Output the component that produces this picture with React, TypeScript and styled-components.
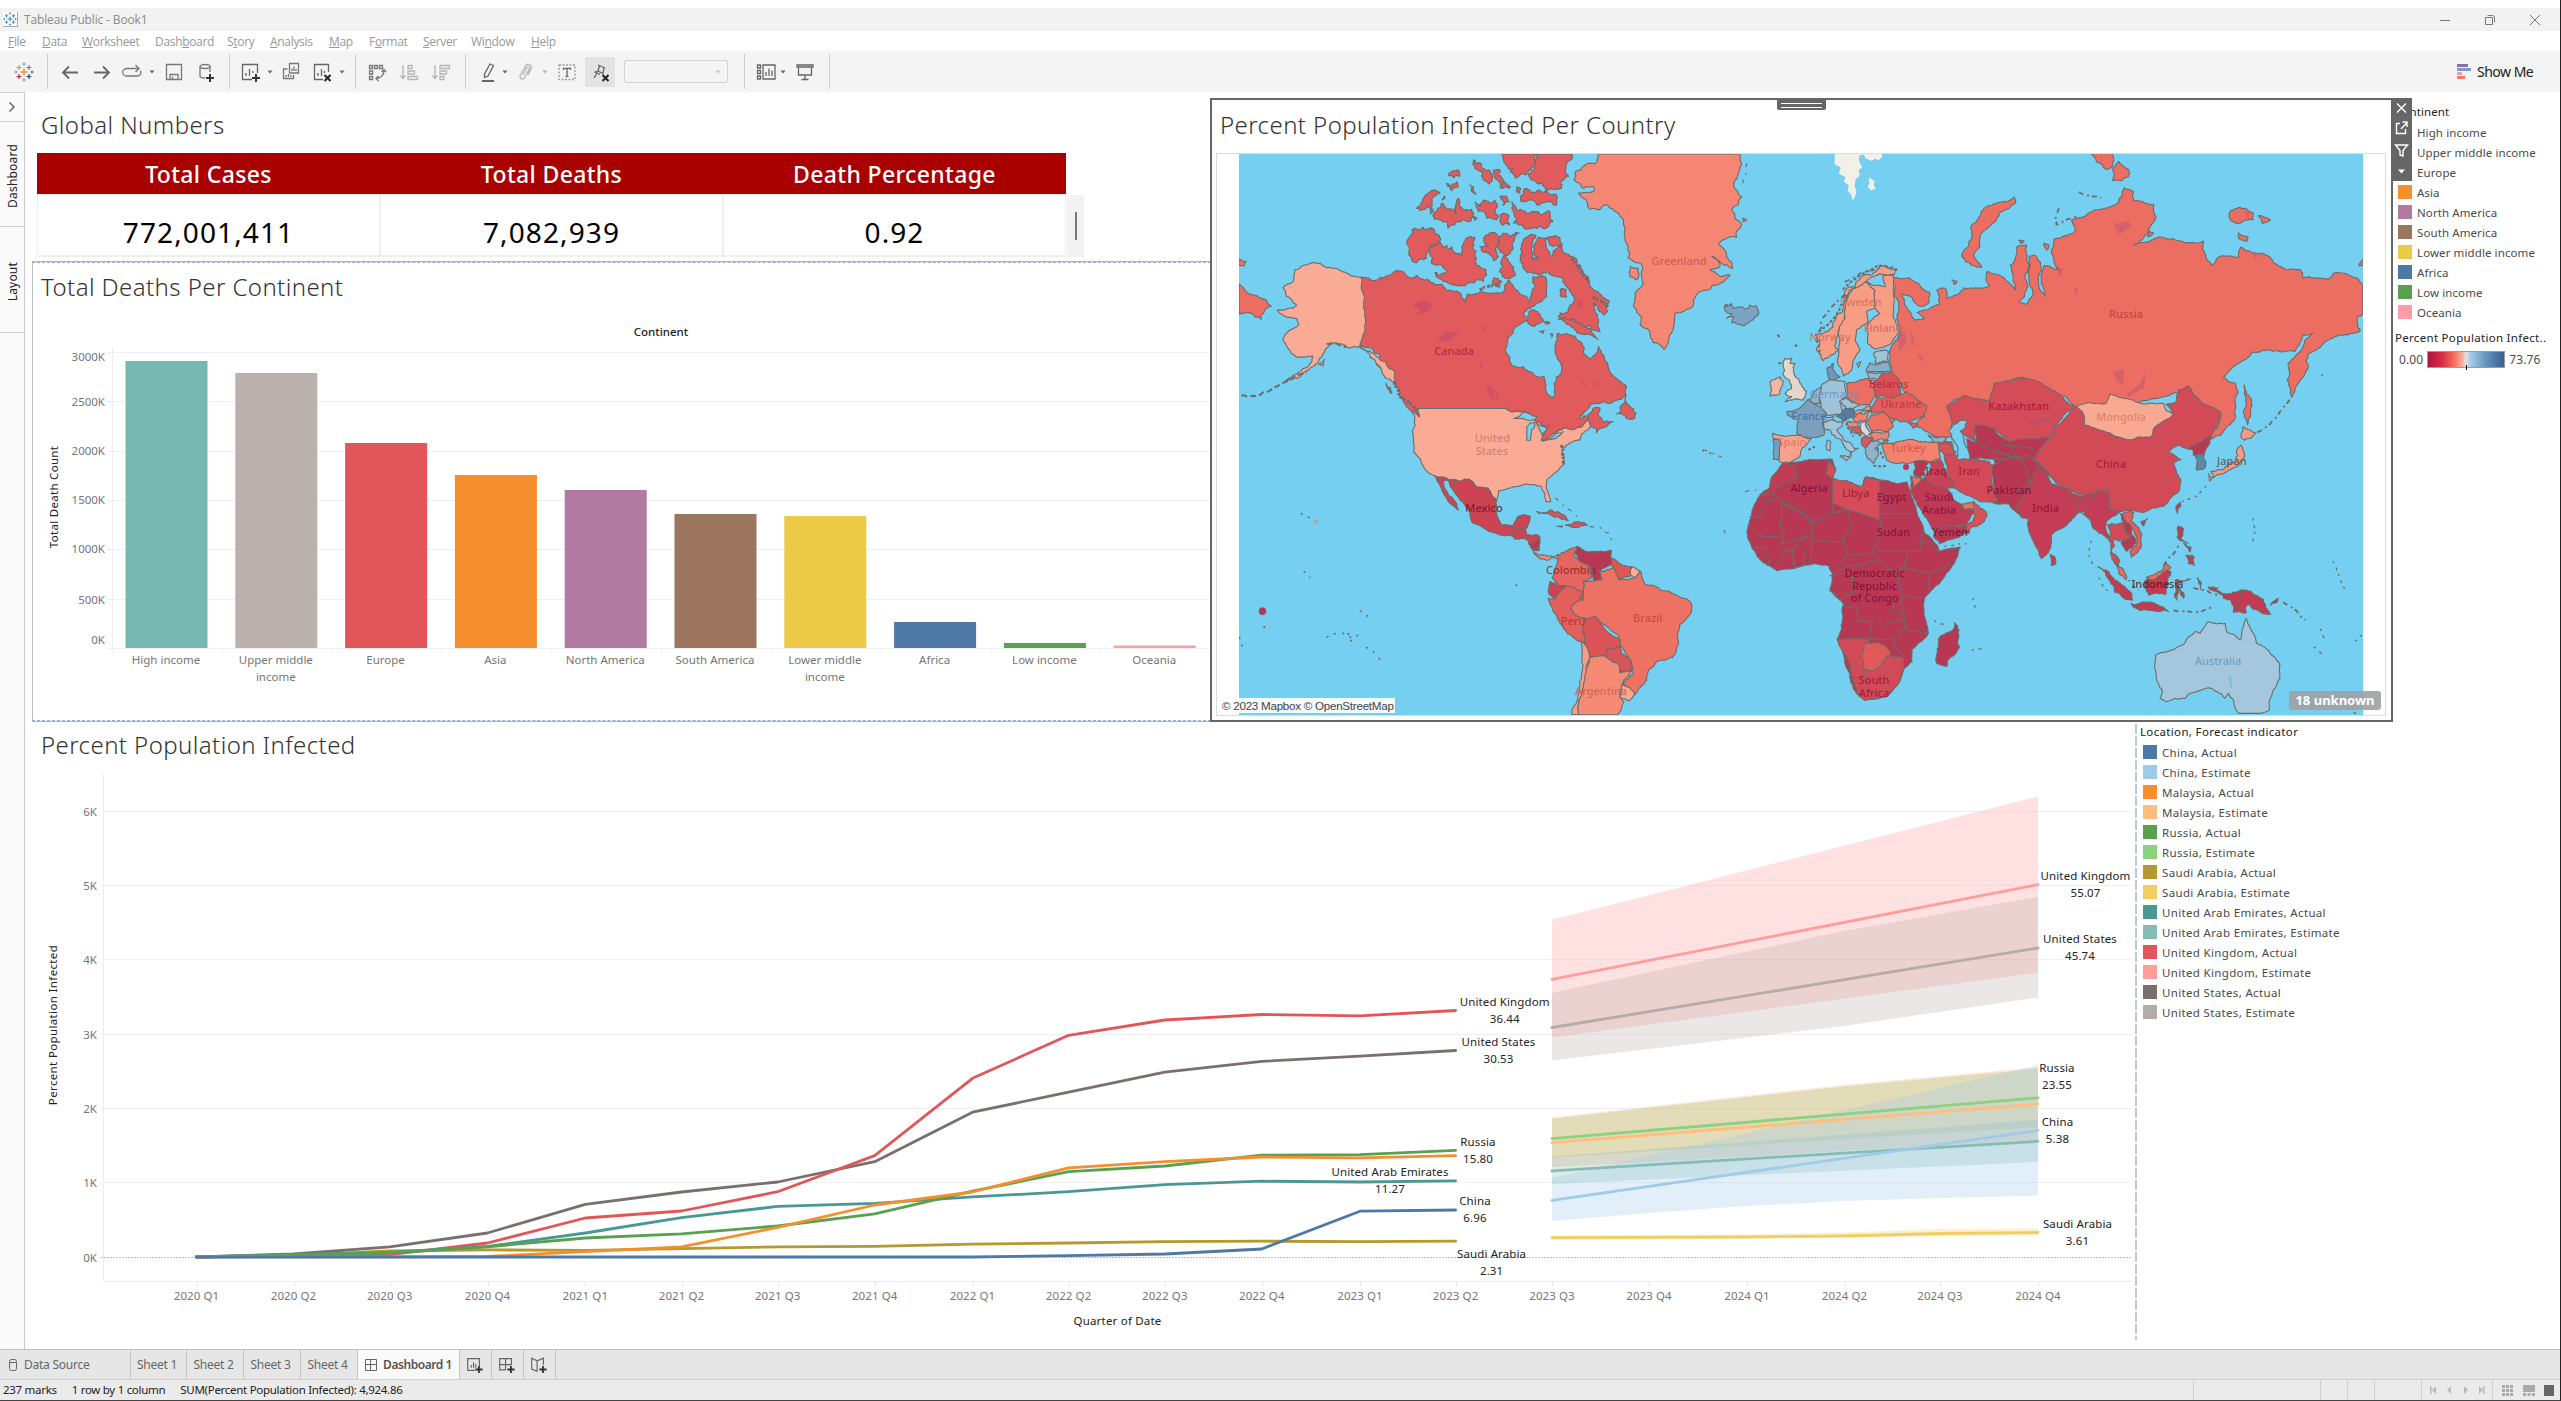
import React from "react";
import styled, { createGlobalStyle, css } from "styled-components";

const UI = `"Noto Sans", "Open Sans", sans-serif`;

const GlobalStyle = createGlobalStyle`
  * { box-sizing: border-box; }
  body { margin: 0; background: #fff; font-family: ${UI}; color: #333; }
`;

/* ---------- window chrome ---------- */

const Window = styled.div`
  width: 2561px;
  height: 1401px;
  display: flex;
  flex-direction: column;
  overflow: hidden;
  background: #fff;
  border-right: 1px solid #222;
  border-bottom: 1px solid #444;
  padding-top: 8px;
`;

const TitleBar = styled.header`
  height: 23px;
  flex: none;
  background: #f2f2f2;
  display: flex;
  align-items: center;
  padding-left: 3px;
  font: 12px/23px "Open Sans", sans-serif;
  letter-spacing: -0.15px;
  color: #8a8a8a;
`;

const AppBadge = styled.span`
  width: 15px;
  height: 15px;
  background: #fff;
  border-right: 1px solid #aaa;
  border-bottom: 1px solid #aaa;
  display: flex;
  margin-right: 6px;
`;

const WindowButtons = styled.div`
  margin-left: auto;
  display: flex;
  gap: 33px;
  margin-right: 19px;
`;

const MenuBar = styled.nav`
  height: 20px;
  flex: none;
  display: flex;
  padding-left: 8px;
  font: 12px/21px "Open Sans", sans-serif;
  letter-spacing: -0.32px;
  color: #989898;
`;

const MenuItem = styled.span<{ $w: number }>`
  width: ${(p) => p.$w}px;
  white-space: nowrap;
`;

const ToolBar = styled.div`
  height: 41px;
  flex: none;
  background: #f4f4f4;
  display: flex;
  align-items: center;
  padding-left: 14px;
`;

const ToolItem = styled.span<{ $gap: number; $w: number }>`
  margin-left: ${(p) => p.$gap}px;
  width: ${(p) => p.$w}px;
  display: flex;
  justify-content: center;
  flex: none;
`;

const Separator = styled.span<{ $gap: number }>`
  margin-left: ${(p) => p.$gap}px;
  width: 1px;
  height: 35px;
  background: #cfcfcf;
`;

const PinButton = styled.span`
  margin-left: 8px;
  width: 30px;
  height: 30px;
  background: #e3e3e3;
  display: flex;
  align-items: center;
  justify-content: center;
`;

const Combo = styled.span`
  margin-left: 9px;
  width: 104px;
  height: 23px;
  border: 1px solid #d2d2d2;
  border-radius: 2px;
  display: flex;
  align-items: center;
  justify-content: flex-end;
  padding-right: 5px;
`;

const ShowMe = styled.span`
  margin-left: auto;
  width: 103px;
  display: flex;
  align-items: center;
  gap: 6px;
  font-size: 14px;
  letter-spacing: -0.5px;
  color: #222;
`;

const Body = styled.div`
  flex: 1;
  min-height: 0;
  display: flex;
`;

const Rail = styled.aside`
  width: 25px;
  flex: none;
  background: #fafafa;
  border-right: 1px solid #c9c9c9;
  display: flex;
  flex-direction: column;
`;

const RailTab = styled.div<{ $h: number; $drop?: number }>`
  height: ${(p) => p.$h}px;
  padding-top: ${(p) => p.$drop || 0}px;
  border-top: 1px solid #cfcfcf;
  display: flex;
  align-items: center;
  justify-content: center;
  font-size: 12px;
  color: #222;
  &:last-child { border-bottom: 1px solid #cfcfcf; }
`;

const Vertical = styled.span`
  writing-mode: vertical-rl;
  transform: rotate(180deg);
  letter-spacing: 0.2px;
`;

/* ---------- dashboard ---------- */

const Canvas = styled.main`
  flex: 1;
  min-width: 0;
  display: flex;
  flex-direction: column;
  padding-left: 7px;
`;

const TopRow = styled.div`
  height: 630px;
  flex: none;
  display: flex;
`;

const BottomRow = styled.div`
  flex: 1;
  display: flex;
`;

const LeftColumn = styled.div`
  width: 1178px;
  flex: none;
  display: flex;
  flex-direction: column;
`;

const SheetTitle = styled.h2<{ $pad: number }>`
  margin: 0;
  padding-left: ${(p) => p.$pad}px;
  height: 32px;
  font-size: 24px;
  line-height: 30px;
  font-weight: 300;
  letter-spacing: 0.42px;
  color: #333;
  white-space: nowrap;
`;

const GlobalPanel = styled.section`
  height: 169px;
  padding-top: 18px;
`;

const NumbersRow = styled.div`
  display: flex;
  margin: 11px 0 0 5px;
`;

const NumbersTable = styled.div`
  width: 1029px;
  display: grid;
  grid-template-columns: repeat(3, 1fr);
`;

const HeadCell = styled.div`
  height: 41px;
  background: #a90000;
  color: #fff;
  font-size: 23px;
  line-height: 43px;
  font-weight: 500;
  letter-spacing: 0.35px;
  text-align: center;
`;

const NumberCell = styled.div`
  height: 63px;
  border: 1px solid #efefef;
  border-width: 1px 1px 2px 1px;
  color: #000;
  font-size: 28px;
  line-height: 74px;
  letter-spacing: 1.1px;
  text-align: center;
`;

const ScrollTrack = styled.div`
  width: 17px;
  height: 62px;
  margin: 42px 0 0 1px;
  background: #f2f2f2;
  display: flex;
  align-items: center;
  justify-content: center;
`;

const ScrollThumb = styled.span`
  width: 2px;
  height: 28px;
  background: #777;
`;

const DeathsPanel = styled.section`
  height: 459px;
  width: 1179px;
  margin-top: 1px;
  border: 1px solid #b9bdc6;
  border-top: 1px dashed #93aed6;
  border-bottom: 1px dashed #93aed6;
  box-shadow: 0 -1px #b2b2b8, 0 1px #b2b2b8;
  padding-top: 9px;
`;

const MapPanel = styled.section`
  position: relative;
  width: 1183px;
  height: 624px;
  margin-top: 6px;
  flex: none;
  border: 2px solid #666;
  padding: 10px 5px 0 4px;
`;

const MapFrame = styled.div`
  height: 563px;
  border: 1px solid #dcdcdc;
  margin-top: 11px;
  display: flex;
  padding-left: 22px;
`;

const Grip = styled.span`
  position: absolute;
  left: 565px;
  top: 0;
  width: 49px;
  height: 10px;
  background: #666;
  border-radius: 0 0 2px 2px;
  padding: 3px 4px;
  display: flex;
  flex-direction: column;
  gap: 3px;
  i { height: 1px; background: #fff; }
`;

const PanelTools = styled.span`
  position: absolute;
  left: 1179px;
  top: -2px;
  width: 21px;
  height: 83px;
  background: #666;
`;

const Attribution = styled.span`
  position: absolute;
  left: 7px;
  bottom: 7px;
  height: 15px;
  width: 176px;
  background: rgba(255, 255, 255, 0.92);
  font: 11.6px/15px "Liberation Sans", Arial, sans-serif;
  letter-spacing: -0.25px;
  color: #444;
  padding-left: 3px;
  white-space: nowrap;
`;

const Unknown = styled.span`
  position: absolute;
  right: 10px;
  bottom: 10px;
  width: 92px;
  height: 19px;
  border-radius: 3px;
  background: rgba(158, 163, 166, 0.92);
  color: #fff;
  font-weight: 700;
  font-size: 13px;
  line-height: 18px;
  text-align: center;
`;

const Legend = styled.div<{ $pad: string; $track: number }>`
  padding: ${(p) => p.$pad};
  font-size: 11.5px;
  letter-spacing: ${(p) => p.$track}px;
  color: #4a4a4a;
  white-space: nowrap;
`;

const LegendTitle = styled.div<{ $top?: number; $track?: number }>`
  height: 20px;
  line-height: 20px;
  color: #222;
  margin-top: ${(p) => p.$top || 0}px;
  ${(p) => p.$track !== undefined && `letter-spacing: ${p.$track}px;`}
`;

const LegendRow = styled.div`
  height: 20px;
  display: flex;
  align-items: center;
  gap: 5px;
  padding-left: 3px;
`;

const Swatch = styled.i<{ $c: string }>`
  width: 14px;
  height: 14px;
  background: ${(p) => p.$c};
`;

const ScaleRow = styled.div`
  display: flex;
  align-items: center;
  gap: 4px;
  padding-left: 4px;
  margin-top: 3px;
  font-size: 12px;
`;

const Scale = styled.span`
  position: relative;
  width: 78px;
  height: 17px;
  border: 1px solid #a09a90;
  background: linear-gradient(90deg, #b1123f, #d92c45 18%, #f2675a 33%, #fcb29c 46%, #dfe3e6 50%, #a8cfe8 55%, #6699c2 75%, #365f90);
  &::after {
    content: "";
    position: absolute;
    left: 38px;
    top: 13px;
    width: 1px;
    height: 5px;
    background: #000;
  }
`;

const TrendPanel = styled.section`
  width: 2103px;
  flex: none;
  padding-top: 8px;
`;

const Divider = styled.span`
  width: 2px;
  margin: 2px 0 9px;
  background: repeating-linear-gradient(#b9c8da 0 10px, #fff 10px 12px);
`;

/* ---------- footer ---------- */

const TabBar = styled.div`
  height: 31px;
  flex: none;
  background: #e6e6e6;
  border-top: 1px solid #c3c3c3;
  border-bottom: 1px solid #cfcfcf;
  display: flex;
  font-size: 12px;
  line-height: 31px;
  letter-spacing: -0.25px;
  color: #666;
`;

const Tab = styled.span<{ $w: number; $active?: boolean; $start?: boolean }>`
  width: ${(p) => p.$w}px;
  border-right: 1px solid #c6c6c6;
  display: flex;
  align-items: center;
  justify-content: ${(p) => (p.$start ? "flex-start" : "center")};
  padding: 0 ${(p) => (p.$active ? 0 : 3)}px 0 ${(p) => (p.$start ? 8 : 0)}px;
  gap: 6px;
  white-space: nowrap;
  ${(p) =>
    p.$active &&
    css`
      background: #fafafa;
      font-weight: 600;
      color: #555;
      line-height: 29px;
      letter-spacing: -0.45px;
    `}
`;

const StatusBar = styled.footer`
  height: 20px;
  flex: none;
  background: #ebebeb;
  display: flex;
  padding-left: 3px;
  gap: 15px;
  font-size: 11.5px;
  line-height: 20px;
  letter-spacing: -0.29px;
  color: #222;
`;

const StatusCells = styled.div`
  margin-left: auto;
  display: flex;
`;

const StatusCell = styled.span<{ $w: number }>`
  width: ${(p) => p.$w}px;
  border-left: 1px solid #d0d0d0;
  display: flex;
  align-items: center;
`;

/* ---------- icons ---------- */

type IconProps = { children: React.ReactNode; c?: string; s?: number };
const Icon = ({ children, c = "#666", s = 20 }: IconProps) => (
  <svg width={s} height={s} viewBox="0 0 20 20" fill="none" stroke={c} strokeWidth="1.3">
    {children}
  </svg>
);

const Caret = ({ c = "#666" }: { c?: string }) => (
  <svg width="8" height="6" viewBox="0 0 8 6">
    <path d="M1.5 1.5h5L4 4.5z" fill={c} />
  </svg>
);

const Cross = ({ x, y, r, c, w = 1 }: { x: number; y: number; r: number; c: string; w?: number }) => (
  <path d={`M${x - r} ${y}H${x + r}M${x} ${y - r}V${y + r}`} stroke={c} strokeWidth={w} />
);

const Logo = ({ mono, s = 20 }: { mono?: boolean; s?: number }) => {
  const k = (c: string) => (mono ? "#2b7fae" : c);
  return (
    <svg width={s} height={s} viewBox="0 0 20 20" fill="none">
      <Cross x={10} y={10} r={3.6} c={k("#eb912c")} w={1.4} />
      <Cross x={5} y={5.5} r={2.4} c={k("#eb912c")} w={1.2} />
      <Cross x={15} y={5.5} r={2.4} c={k("#59879b")} w={1.2} />
      <Cross x={5} y={14.5} r={2.4} c={k("#c72035")} w={1.2} />
      <Cross x={15} y={14.5} r={2.4} c={k("#1f457e")} w={1.2} />
      <Cross x={10} y={2} r={1.6} c={k("#7099a6")} />
      <Cross x={10} y={18} r={1.6} c={k("#8a8fb5")} />
      <Cross x={2} y={10} r={1.6} c={k("#7099a6")} />
      <Cross x={18} y={10} r={1.6} c={k("#5c6692")} />
    </svg>
  );
};

const Plus = ({ x = 15.5, y = 15.5 }) => <path d={`M${x - 4} ${y}h8M${x} ${y - 4}v8`} stroke="#333" strokeWidth="2" />;
const Ex = () => <path d="M12.5 13l6 6M18.5 13l-6 6" stroke="#222" strokeWidth="2" />;

const Toolbar = () => (
  <ToolBar>
    <ToolItem $gap={0} $w={20}><Logo /></ToolItem>
    <Separator $gap={13} />
    <ToolItem $gap={12} $w={20}><Icon><path d="M18 10.500H3M9 4.500L3 10.500L9 16.500" strokeWidth="1.8" /></Icon></ToolItem>
    <ToolItem $gap={12} $w={20}><Icon><path d="M2 10.500H17M11 4.500L17 10.500L11 16.500" strokeWidth="1.8" /></Icon></ToolItem>
    <ToolItem $gap={10} $w={20}><Icon c="#777"><path d="M17 6.500H4.500a3.700 3.700 0 0 0 0 7.500h11a3.500 3.500 0 0 0 2.700-5.500M13.500 3l3.500 3.500l-3.500 3.500" /></Icon></ToolItem>
    <ToolItem $gap={6} $w={8}><Caret /></ToolItem>
    <ToolItem $gap={8} $w={20}><Icon c="#777"><path d="M2.500 2.500h15v15h-15zM6 17.500v-5h8v5M8.500 17v-2.500" /></Icon></ToolItem>
    <ToolItem $gap={12} $w={20}><Icon c="#777"><ellipse cx="9" cy="4.500" rx="5" ry="2" /><path d="M4 4.500v9.500c0 1.300 2 2 5 2M14 4.500V10" /><Plus x={14} y={16} /></Icon></ToolItem>
    <Separator $gap={13} />
    <ToolItem $gap={10} $w={20}><Icon><path d="M12 17.500H2.500v-15h15V11M6 14v-3M9.500 14V7M13 11V9" /><Plus x={16} y={16} /></Icon></ToolItem>
    <ToolItem $gap={6} $w={8}><Caret /></ToolItem>
    <ToolItem $gap={7} $w={20}><Icon c="#777"><path d="M8.500 1.500h9v9.500h-9zM11 9V6.500M13 9V4.500M15 9V7M6.500 7h-4v9.500h10V13M5 15v-2M7.500 15v-3M10 15v-2" /></Icon></ToolItem>
    <ToolItem $gap={11} $w={20}><Icon><path d="M11 17.500H2.500v-15h14V10M6 14v-3M9.500 14V7M12.500 11V9" /><Ex /></Icon></ToolItem>
    <ToolItem $gap={6} $w={8}><Caret /></ToolItem>
    <Separator $gap={9} />
    <ToolItem $gap={11} $w={20}><Icon c="#777"><path d="M2.500 3.500h3v3h-3zM7.500 3.500h3v3h-3zM12.500 3.500h3v3h-3zM2.500 9h3v3h-3zM2.500 14.500h3v3h-3zM17 8c0 5-3 8-8 8.500M14.500 10L17 7.500L19 10M11.500 14L9 16.500L11.500 19" /></Icon></ToolItem>
    <ToolItem $gap={12} $w={20}><Icon c="#b5b5b5"><path d="M4 3v13M1.500 13.500L4 16.500l2.500-3M9 3.500h4v3H9zM9 9h6.500v3H9zM9 14.500h9.500v3H9z" /></Icon></ToolItem>
    <ToolItem $gap={12} $w={20}><Icon c="#b5b5b5"><path d="M4 3v13M1.500 13.500L4 16.500l2.500-3M9 3.500h9.500v3H9zM9 9h6.500v3H9zM9 14.500h4v3H9z" /></Icon></ToolItem>
    <Separator $gap={14} />
    <ToolItem $gap={12} $w={20}><Icon><path d="M12 2l3.500 1.500L10 14l-3.500 1.500L6.500 12z" /><path d="M4 19h12" strokeWidth="2" /></Icon></ToolItem>
    <ToolItem $gap={3} $w={8}><Caret /></ToolItem>
    <ToolItem $gap={6} $w={20}><Icon c="#b5b5b5"><path d="M8 13l4-7.500a1.500 1.500 0 0 1 2.500 1.500L9 16.500a2.500 2.500 0 0 1-4-2.500l5.500-10a3 3 0 0 1 5.500 3l-3 6" /></Icon></ToolItem>
    <ToolItem $gap={6} $w={8}><Caret c="#b5b5b5" /></ToolItem>
    <ToolItem $gap={8} $w={20}><Icon><rect x="2" y="3" width="16" height="14.500" strokeDasharray="2 1.500" stroke="#999" /><path d="M6.500 8V6.300h7V8M10 6.300v8M8.500 14.300h3" /></Icon></ToolItem>
    <PinButton><Icon><path d="M8 3l7 3M9.500 3.700L8 9l5 2.500l1-5.500M8 9l-3 1l5 2.500M7 11l-3 5" /><Ex /></Icon></PinButton>
    <Combo><Caret c="#c4c4c4" /></Combo>
    <Separator $gap={16} />
    <ToolItem $gap={11} $w={20}><Icon><path d="M1.500 3h3v3h-3zM1.500 8.500h3v3h-3zM1.500 14h3v3h-3zM7 3h12v14H7zM10 14v-4M13 14V6.500M16 14V8.500" /></Icon></ToolItem>
    <ToolItem $gap={3} $w={8}><Caret /></ToolItem>
    <ToolItem $gap={8} $w={20}><Icon><path d="M2 3h16v2H2zM3.500 5v8h13V5M10 13v4.500M6.500 17.500h7" /></Icon></ToolItem>
    <Separator $gap={14} />
    <ShowMe>
      <svg width="14" height="15" viewBox="0 0 14 15">
        <path fill="#86709e" d="M0 0h11v3H0z" />
        <path fill="#7a9cc6" d="M0 4h14v3H0z" />
        <path fill="#f4a57a" d="M0 8h5v3H0z" />
        <path fill="#f5717b" d="M0 12h8v3H0z" />
      </svg>
      Show Me
    </ShowMe>
  </ToolBar>
);

const menus: [string, string, string, number][] = [
  ["", "F", "ile", 34], ["", "D", "ata", 40], ["", "W", "orksheet", 73], ["Dash", "b", "oard", 72],
  ["S", "t", "ory", 43], ["", "A", "nalysis", 59], ["", "M", "ap", 40], ["F", "o", "rmat", 54],
  ["", "S", "erver", 48], ["Wi", "n", "dow", 60], ["", "H", "elp", 40],
];

/* ---------- bar chart ---------- */

const bars = [
  { n: ["High income"], v: 361, c: "#76b7b2" },
  { n: ["Upper middle", "income"], v: 373, c: "#bab0ac" },
  { n: ["Europe"], v: 443, c: "#e15759" },
  { n: ["Asia"], v: 475, c: "#f58f2d" },
  { n: ["North America"], v: 490, c: "#b07aa1" },
  { n: ["South America"], v: 514, c: "#9c755f" },
  { n: ["Lower middle", "income"], v: 516, c: "#edc948" },
  { n: ["Africa"], v: 622, c: "#4e79a7" },
  { n: ["Low income"], v: 643, c: "#59a14f" },
  { n: ["Oceania"], v: 645.5, c: "#ff9da7" },
];

const ticksY: [string, number, number][] = [
  ["3000K", 352.5, 361], ["2500K", 401.5, 406], ["2000K", 451.5, 455], ["1500K", 500.5, 504],
  ["1000K", 549.5, 553], ["500K", 599.5, 604], ["0K", 648.5, 644],
];

const ChartText = styled.text<{ $dim?: boolean; $track?: number }>`
  font-family: ${UI};
  font-size: 11.5px;
  letter-spacing: ${(p) => p.$track || 0}px;
  fill: ${(p) => (p.$dim ? "#757575" : "#222")};
`;

const BarChart = () => (
  <svg width="1177" height="409" viewBox="32 304 1177 409" style={{ display: "block" }}>
    <ChartText x="660" y="336" textAnchor="middle" fontWeight="500">Continent</ChartText>
    <ChartText $track={0.3} transform="translate(57 497) rotate(-90)" textAnchor="middle">Total Death Count</ChartText>
    <path d="M111.500 347V652" stroke="#eee" />
    {ticksY.map(([t, y, ty]) => (
      <g key={t}>
        <path d={`M106 ${y}H1209`} stroke="#efefef" />
        <ChartText $dim x="104" y={ty} textAnchor="end">{t}</ChartText>
      </g>
    ))}
    {bars.map((b, i) => (
      <g key={i}>
        <rect x={124.5 + i * 109.8} y={b.v} width="82" height={648 - b.v} fill={b.c} />
        <path d={`M${111.5 + i * 109.8} 649v4`} stroke="#eee" />
        {b.n.map((l, j) => (
          <ChartText $dim key={j} x={165 + i * 109.8} y={664 + j * 17} textAnchor="middle">{l}</ChartText>
        ))}
      </g>
    ))}
  </svg>
);

/* ---------- trend chart ---------- */

const qx = [196.5, 293.5, 389.7, 487.5, 585.3, 681.5, 777.7, 874.7, 972.5, 1068.6, 1164.8, 1261.8, 1360, 1455.6, 1552, 1649, 1747, 1844.5, 1940, 2038];
const quarters = qx.map((_, i) => `${2020 + Math.floor(i / 4)} Q${(i % 4) + 1}`);

const actual: [string, number[]][] = [
  ["#b6992d", [1257, 1255.5, 1251, 1249.9, 1250.3, 1248.6, 1246.8, 1246.4, 1244.2, 1243, 1241.6, 1241.2, 1241.6, 1241.2]],
  ["#79706e", [1257, 1254, 1246.8, 1233, 1204.3, 1192, 1182, 1161.7, 1112.2, 1092.2, 1072.2, 1061.4, 1056.2, 1050.5]],
  ["#e15759", [1257, 1255.4, 1254.6, 1243, 1218, 1211, 1191.7, 1155.6, 1078.3, 1035.3, 1020, 1014.5, 1015.8, 1010.5]],
  ["#499894", [1257, 1254.6, 1252.5, 1246.4, 1233, 1217.7, 1206.4, 1203.4, 1196.9, 1191.7, 1184.7, 1181.2, 1182, 1180.8]],
  ["#59a14f", [1257, 1255, 1253, 1246.8, 1238, 1233.8, 1226, 1213.8, 1191.2, 1171.7, 1166, 1155.2, 1154.7, 1150.4]],
  ["#f58f2d", [1257, 1256.8, 1256.8, 1256.4, 1251.6, 1246.8, 1227.3, 1205, 1192, 1167.8, 1161.7, 1157, 1157.8, 1155.6]],
  ["#4e79a7", [1257, 1257, 1257, 1257, 1257, 1257, 1257, 1257, 1257, 1255.7, 1254, 1249, 1211.2, 1210]],
];

const forecast: [string, number[]][] = [
  ["#ff9d9a", [979.3, 884.6]],
  ["#b5aba8", [1027.5, 948]],
  ["#8cd17d", [1138.7, 1097.8]],
  ["#ffbe7d", [1142.6, 1104]],
  ["#86bcb6", [1170.8, 1141.3]],
  ["#a0cbe8", [1200.3, 1130.4]],
];

const bands: [string, string][] = [
  ["#ff9d9a", "1552,919.8 2038,796.4 2038,972.8 1552,1037.5"],
  ["#bab0ac", "1552,992.7 1844,931 2038,896.8 2038,997.5 1844,1026 1552,1060.5"],
  ["#8cd17d", "1552,1118.700 1844,1086.500 2038,1068.800 2038,1127 1552,1157.400"],
  ["#f2ad72", "1552,1117.4 1844,1085 2038,1067.4 2038,1140 1552,1167.300"],
  ["#86bcb6", "1552,1156.500 2038,1120 2038,1162 1552,1184"],
  ["#a0cbe8", "1552,1178 2038,1065.300 2038,1195.600 1940,1198 1844,1201 1747,1206 1649,1213 1552,1221"],
  ["#f1ce63", "1552,1235.500 1747,1234.500 1844,1232.500 1940,1229 2038,1228.500 2038,1235.500 1552,1240"],
];

const marks: [number, number, string, string][] = [
  [1504.7, 1002, "United Kingdom", "36.44"], [1498.5, 1042, "United States", "30.53"], [1478, 1142, "Russia", "15.80"],
  [1390, 1172, "United Arab Emirates", "11.27"], [1475, 1201, "China", "6.96"], [1491.6, 1254, "Saudi Arabia", "2.31"],
  [2085.5, 876, "United Kingdom", "55.07"], [2080, 939, "United States", "45.74"], [2057, 1068, "Russia", "23.55"],
  [2057.5, 1122, "China", "5.38"], [2077.5, 1224, "Saudi Arabia", "3.61"],
];

const rowsY: [string, number][] = [["6K", 811.5], ["5K", 885.5], ["4K", 959.5], ["3K", 1034.5], ["2K", 1108.5], ["1K", 1182.5]];

const TrendChart = () => (
  <svg width="2102" height="575" viewBox="32 762 2102 575" style={{ display: "block" }}>
    <ChartText $track={0.36} transform="translate(57 1025) rotate(-90)" textAnchor="middle">Percent Population Infected</ChartText>
    <path d="M103.500 774V1281.500H2132" stroke="#ececec" fill="none" />
    {rowsY.map(([t, y]) => (
      <g key={t}>
        <path d={`M101 ${y}H2132`} stroke="#f0f0f0" />
        <ChartText $dim x="97" y={y + 4} textAnchor="end">{t}</ChartText>
      </g>
    ))}
    <ChartText $dim x="97" y="1261.500" textAnchor="end">0K</ChartText>
    <path d="M101 1257.500H2132" stroke="#bdbdbd" strokeDasharray="2 1" />
    {bands.map(([c, p]) => (
      <polygon key={c} points={p} fill={c} fillOpacity="0.3" />
    ))}
    <g fill="none" strokeWidth="2.800" strokeLinejoin="round" strokeLinecap="round">
      {forecast.map(([c, [a, b]]) => (
        <path key={c} d={`M1552 ${a}L2038 ${b}`} stroke={c} />
      ))}
      <path d="M1552 1237.700L1747 1237L1844 1236L1940 1233.500L2038 1232.500" stroke="#f1ce63" />
      {actual.map(([c, v]) => (
        <polyline key={c} points={v.map((y, i) => `${qx[i]},${y}`).join(" ")} stroke={c} />
      ))}
    </g>
    {marks.map(([x, y, a, b], i) => (
      <g key={i} textAnchor="middle">
        <ChartText $track={0.12} x={x} y={y + 3.5}>{a}</ChartText>
        <ChartText $track={0.12} x={x} y={y + 20.5}>{b}</ChartText>
      </g>
    ))}
    {quarters.map((q, i) => (
      <g key={q}>
        <path d={`M${Math.round(qx[i]) + 0.5} 1282v5`} stroke="#e8e8e8" />
        <ChartText $dim $track={0.1} x={qx[i]} y="1300" textAnchor="middle">{q}</ChartText>
      </g>
    ))}
    <ChartText $track={0.2} x="1117.500" y="1325" textAnchor="middle">Quarter of Date</ChartText>
  </svg>
);

/* ---------- map ---------- */

type Pt = [number, number];

const toPoints = (s: string): Pt[] => {
  const n = s.trim().split(/\s+/).map(Number);
  const out: Pt[] = [];
  for (let i = 0; i + 1 < n.length; i += 2) out.push([n[i], n[i + 1]]);
  return out;
};

const noise = (a: Pt, b: Pt) => {
  const v = Math.sin(a[0] * 12.9898 + a[1] * 78.233 + b[0] * 37.719 + b[1] * 4.581) * 43758.5453;
  return (v - Math.floor(v)) * 2 - 1;
};

/* Midpoint displacement; an edge shared by two countries always bends the same way. */
const bend = (a: Pt, b: Pt, amp: number, out: Pt[]) => {
  const dx = b[0] - a[0];
  const dy = b[1] - a[1];
  const len = Math.hypot(dx, dy);
  if (len < 6 || ((dx === 0 || dy === 0) && len > 60)) {
    out.push(b);
    return;
  }
  const flip = a[0] < b[0] || (a[0] === b[0] && a[1] < b[1]);
  const k = (flip ? noise(a, b) : -noise(b, a)) * amp;
  const m: Pt = [(a[0] + b[0]) / 2 - dy * k, (a[1] + b[1]) / 2 + dx * k];
  bend(a, m, amp, out);
  bend(m, b, amp, out);
};

const outline = (s: string, closed: boolean, amp: number) => {
  const p = toPoints(s);
  const out: Pt[] = [p[0]];
  for (let i = 1; i < p.length; i++) bend(p[i - 1], p[i], amp, out);
  if (closed) bend(p[p.length - 1], p[0], amp, out);
  return "M" + out.map((q) => q[0].toFixed(1) + " " + q[1].toFixed(1)).join("L") + (closed ? "Z" : "");
};

const Area = ({ f, p, amp = 0.16 }: { f: string; p: string; amp?: number }) => (
  <>
    {p.split("|").map((s, i) => (
      <path key={i} d={outline(s, true, amp)} fill={f} vectorEffect="non-scaling-stroke" />
    ))}
  </>
);

const Border = ({ p, dash, w }: { p: string; dash?: string; w?: number }) => (
  <>
    {p.split("|").map((s, i) => (
      <path key={i} d={outline(s, false, 0.1)} fill="none" strokeDasharray={dash} strokeWidth={w} vectorEffect="non-scaling-stroke" />
    ))}
  </>
);

const SEA = "#75cff0";
const DARK = "#b83854";
const CAN = "#e25b5c";
const RUS = "#ec6e62";
const IDN = "#c43a50";

const americasNorth = (
  <g transform="translate(141 -4) scale(0.33333)">
    <Area f="#f9ab95" p="115 775 375 775 400 785 440 785 465 810 495 830 485 872 530 845 560 832 605 830 625 800 632 830 608 850 600 870 560 885 545 905 553 940 530 965 502 988 498 1010 512 1055 498 1055 485 1010 440 1002 400 1010 355 1022 350 1050 325 1015 300 1015 290 1010 268 988 210 990 165 978 135 958 100 905 98 850 105 800 95 780 118 800" amp={0.1} />
    <Area f="#cc4354" p="165 978 210 990 268 988 290 1010 325 1015 350 1050 350 1095 365 1125 400 1125 415 1098 450 1098 442 1130 430 1150 400 1160 390 1155 360 1155 320 1140 275 1115 270 1085 240 1050 205 990 190 990 205 1035 230 1060 235 1080 210 1060 185 1020" amp={0.1} />
    <Area f={CAN} p="-58 381 -20 392 0 383 30 375 60 362 75 372 95 385 110 376 140 388 185 402 200 420 240 428 255 455 262 432 300 425 340 430 370 425 385 390 400 410 415 425 440 440 450 455 455 430 465 410 460 380 495 380 500 440 470 460 455 470 430 490 440 512 405 530 400 548 385 560 375 600 395 645 430 650 460 670 492 680 495 715 515 742 525 735 522 700 530 680 545 660 540 635 530 620 533 550 560 550 585 558 605 578 612 612 632 627 645 615 656 590 675 630 690 665 715 690 740 710 738 735 700 755 640 760 610 790 600 808 640 775 660 775 655 795 670 815 700 815 680 830 650 848 650 835 632 830 625 800 605 830 560 832 530 845 485 872 495 830 465 810 440 785 400 785 375 775 115 775 118 800 80 770 60 740 45 700 20 660 0 615 -20 600 -58 591" />
    <Area f={CAN} amp={0.27} p="150 290 180 275 188 292 200 285 205 298 215 290 222 305 245 318 248 300 250 280 270 260 283 262 278 290 285 320 300 350 320 375 312 382 310 395 290 388 265 398 240 408 205 400 175 385 165 368 195 370 200 362 165 345 155 340 160 325 150 312|95 240 130 232 165 250 182 270 150 290 140 325 110 338 85 312|300 290 320 285 325 292 310 265 325 255 345 248 358 270 350 290 355 320 340 332 325 310|368 250 418 250 400 295 385 315 370 310|365 330 375 315 385 330 395 345 405 370 375 385 358 365" />
    <Area f={CAN} amp={0.22} p="425 290 440 262 468 255 455 285 455 325 475 325 462 300 475 262 505 262 498 285 515 320 530 295 545 290 570 320 600 345 610 370 625 380 640 420 665 435 688 455 682 485 670 495 655 470 640 460 645 485 655 510 660 545 630 525 600 520 575 505 535 500 540 488 565 485 570 465 585 450 575 430 555 405 535 380 505 365 475 375 460 370 430 355 420 330|505 262 540 265 548 285 520 290|535 508 575 508 610 530 655 568 620 552 570 525" />
    <Area f={CAN} amp={0.28} p="455 480 475 490 510 520 480 520 460 530 450 525|340 385 365 395 360 410 340 405|540 420 558 418 560 440 543 440|165 185 185 160 200 175 220 180 228 195 235 145 250 180 275 178 270 215 240 215 205 235 200 215 165 208|110 175 130 145 165 120 180 130 150 175 145 165 120 182|285 155 300 170 310 150 330 160 345 150 350 210 320 205 310 185 295 185|360 195 385 195 388 225 365 225|360 140 380 138 388 155 368 165|395 155 400 165 410 180 450 190 480 192 510 185 518 215 490 235 430 230 400 220 398 180|430 125 440 115 455 128 500 125 530 135 530 165 500 155 470 165 425 155|445 70 465 50 475 12 575 12 560 40 565 80 540 95 545 115 500 125 485 100 455 90|370 12 470 12 460 50 445 60 440 75 425 70 405 85 390 65 400 55 375 40|280 30 300 40 325 60 335 95 325 102 310 90 285 55|340 60 360 60 375 95 360 100 345 85|200 100 230 95 235 110 215 122|205 75 235 60 240 78|270 105 280 110 288 132 275 125|360 105 390 108 388 115 365 115|410 110 422 115 420 128 410 125|478 545 492 540 490 550|738 738 745 765 768 790 765 805 710 792 725 765|18 700 30 712 35 730|510 552 518 552 515 562|280 200 292 205 285 212|185 150 195 145 192 138|150 180 160 178 152 192" />
    <Area f={SEA} p="400 805 430 785 470 800 465 808 430 805|440 870 440 830 465 815 455 840 452 870|468 818 500 830 485 855 478 835|487 872 530 848 550 845 520 866" />
    <Area f="#d9535a" p="470 1085 510 1080 560 1105 565 1112 520 1100 480 1090|555 1125 595 1115 622 1125 590 1132|530 1128 548 1128 545 1132" />
    <Area f="#f58674" p="655 12 645 40 615 45 585 65 582 90 610 115 642 112 640 125 595 130 620 155 630 178 680 165 715 190 735 235 745 290 745 325 785 345 790 400 765 430 760 470 785 500 780 520 820 578 852 598 865 575 885 490 940 465 960 425 1050 375 990 360 1020 348 995 318 1058 355 1040 320 1015 280 1070 262 1085 225 1055 180 1085 140 1060 100 1083 45 1080 12" />
    <Area f="#f58674" p="750 350 775 355 770 390 750 380|1088 205 1100 210 1090 215" />
    <Area f="#7ba3c4" p="1035 465 1055 462 1060 475 1075 470 1095 478 1110 465 1130 468 1137 490 1120 510 1090 528 1055 518 1062 500 1040 505 1055 492 1035 482" />
    <Border p="-15 622 20 660 45 705 60 740 112 785|-10 640 30 672|0 650 38 690|545 885 552 945|575 325 630 400|640 440 685 470|300 420 360 400" w={3} dash="3 1 2 2" />
    <Border p="525 1045 545 1060 580 1090 595 1100|630 1130 660 1132 690 1150 692 1185|970 900 1000 910 1025 920|1095 1025 1135 1020|1030 1140 1045 1160|1100 40 1090 100" dash="4 6 2 5" />
    <g fill="#a03a78" fillOpacity="0.28" stroke="none">
      <path d="M95 465L130 450L160 465L145 485L115 495L120 478ZM170 570L200 545L240 545L205 575ZM318 710L335 705L345 750L330 745ZM345 720L360 745L350 752ZM295 655L308 632L305 655ZM305 535L320 525L318 542ZM595 450L612 462L596 475ZM600 690L620 700L615 712ZM648 697L668 700L655 706ZM500 818L515 828L500 838Z" />
    </g>
  </g>
);

const americasSouth = (
  <g transform="translate(-39 -64) scale(0.39541 0.40816)">
    <Area f="#f9ab95" p="406 458 405 630 375 632 330 620 310 650 280 680 215 715 245 695 275 675 285 652 245 655 210 610 225 590 250 575 245 560 215 555 195 540 245 528 235 520 210 485 235 470 240 440 285 422 320 435 375 450" amp={0.13} />
    <Area f="#f9ab95" p="405 630 430 640 470 665 492 690 495 715 460 690 430 655|300 672 315 660 312 675" />
    <Area f={RUS} p="99 475 125 500 165 513 180 530 155 562 125 545 99 550|99 415 117 420 112 430 99 430" />
    <Area f="#cc4354" p="795 1090 800 1075 820 1070 825 1090 855 1090 860 1105 858 1128 845 1128 830 1105 795 1100" />
    <Area f={DARK} p="832 1112 860 1095 858 1128 845 1125" />
    <Area f="#f08a76" p="842 1128 870 1140 905 1138 908 1150 890 1145 875 1152 850 1140" />
    <g>
      <Area amp={0.1} f="#ee7263" p="968 1250 970 1205 995 1203 1015 1200 1010 1180 1045 1170 1060 1200 1100 1195 1115 1180 1125 1210 1165 1225 1210 1240 1243 1258 1243 1280 1213 1310 1210 1355 1195 1390 1155 1400 1135 1420 1130 1445 1100 1482 1068 1455 1095 1430 1090 1400 1060 1360 1060 1340 1005 1295 975 1295 955 1290 938 1270 945 1245" />
      <Area amp={0.1} f="#e56560" p="905 1210 890 1195 905 1140 925 1130 955 1118 945 1140 985 1165 990 1195 970 1205 968 1250 930 1225 885 1205" />
      <Area amp={0.1} f={DARK} p="955 1118 965 1125 1040 1128 1040 1150 1045 1160 1010 1180 1015 1200 995 1203 985 1165 960 1155 948 1135" />
      <Area amp={0.1} f="#dd5757" p="1040 1145 1070 1165 1092 1168 1090 1190 1060 1200 1045 1170" />
      <Area amp={0.1} f="#f8b09a" p="1092 1168 1112 1178 1100 1195 1088 1188" />
      <Area amp={0.1} f="#e25f5c" p="880 1245 895 1247 925 1215 968 1228 960 1250 938 1270 955 1290 975 1295 972 1355 920 1320 895 1280" />
      <Area amp={0.1} f="#cd4352" p="885 1205 925 1215 905 1235 895 1247 882 1235" />
      <Area amp={0.1} f="#f58a75" p="985 1390 1025 1387 1062 1410 1062 1428 1095 1415 1068 1455 1062 1485 1072 1500 1055 1531 958 1531 965 1480 975 1420" />
      <Area amp={0.1} f="#db5257" p="975 1295 1000 1290 1010 1305 1062 1345 1062 1362 1030 1370 1025 1387 985 1390 972 1355" />
      <Area amp={0.1} f="#d9545a" p="1030 1370 1062 1362 1065 1380 1090 1400 1088 1425 1062 1425 1060 1408 1025 1387" />
      <Area amp={0.1} f="#f79c86" p="965 1352 975 1360 985 1390 975 1430 965 1480 958 1531 940 1531 960 1450 965 1400" />
      <Area amp={0.1} f="#f8a890" p="1068 1455 1100 1478 1085 1497 1062 1488" />
    </g>
    <Border p="105 748 165 740 215 715 270 690|320 622 370 630" dash="6 3" w={2} />
    <Border p="255 1037 275 1047 295 1058|320 1340 360 1330 385 1345 365 1325|405 1275 425 1290|380 1350 400 1335|420 1365 455 1395|798 1212 812 1218|100 1340 112 1375|160 1315 175 1320|262 1180 278 1195|1270 883 1305 890" dash="2 6 2 7" w={1.6} />
    <circle cx="158" cy="1277" r="9" fill={DARK} />
    <circle cx="292" cy="1057" r="4" fill="#f9ab95" />
  </g>
);

const russia = (
  <Area
    amp={0.13}
    f={RUS}
    p="225 460 260 460 300 495 298 522 280 530 245 500 250 525 262 545 270 565 290 560 275 545 320 525 315 490 330 485 335 510 370 485 420 480 415 445 450 460 475 485 470 490 462 430 475 385 495 380 500 430 495 490 480 520 495 525 507 490 500 410 512 405 520 480 532 505 530 430 560 440 545 400 550 365 590 350 585 320 630 295 680 275 690 240 710 250 710 270 750 280 755 310 710 380 760 360 815 375 850 370 855 405 868 430 880 410 920 410 925 385 970 400 1000 430 1045 440 1050 460 1100 465 1110 450 1145 455 1170 475 1170 550 1160 555 1165 590 1140 600 1085 630 1060 650 1060 680 1040 720 1027 753 1018 710 1020 670 1045 640 1070 595 1050 600 1035 640 1015 640 990 640 950 642 920 670 890 705 915 720 920 740 915 800 885 845 865 855 870 835 885 790 850 780 825 735 700 780 600 780 540 740 480 705 430 720 420 760 370 750 335 775 345 820 345 850 325 852 290 835 270 822 290 800 290 775 250 740 235 710 220 660 220 640 240 600 235 550 228 500"
  />
);

const eurasiaAfrica = (
  <g transform="translate(541 -64) scale(0.49808 0.40816)">
    <g fill="#f3f0ea" stroke="none">
      <path d="M110 157H205L204 166L198 172L190 168L185 174L172 168L168 158L160 160L158 172L165 190L158 196L160 210L152 218L150 235L154 250L147 272L142 255L136 248L138 234L128 225L132 214L118 205L122 190L110 182ZM178 215L184 218L190 225L188 232L192 242L182 246L176 236L180 228Z" />
    </g>
    {russia}
    <Area f={RUS} p="470 262 472 278 440 300 415 340 400 370 390 400 405 435 385 430 365 405 380 370 385 330 410 290 440 275|625 157 668 157 668 185 655 195 635 175|680 175 700 195 700 212 668 222|905 295 920 288 950 300 950 318 920 328 905 320|960 308 985 318 970 328|920 350 940 360 938 370 922 365|932 722 942 750 945 780 938 820 932 800 935 760|1170 415 1162 430 1170 430|480 368 490 370 484 376|345 465 355 468 350 477|530 375 540 380 535 392|740 345 750 350 738 360" />
    <Area amp={0.09} f="#d44c58" p="335 775 370 748 420 762 430 718 480 705 520 715 560 745 590 775 575 790 555 820 545 850 500 855 480 865 460 865 430 830 395 820 390 845 395 865 375 850 355 830 350 825" />
    <Area amp={0.09} f="#d34a57" p="520 880 545 850 550 825 580 795 590 775 610 785 610 820 650 835 700 857 745 850 750 830 790 795 775 770 795 765 800 735 820 725 845 765 885 790 870 835 865 855 840 865 820 880 800 870 780 885 805 905 790 915 805 955 800 985 770 1020 730 1035 710 1030 665 1030 655 980 630 990 600 990 565 975 535 940 510 900" />
    <Area amp={0.09} f="#f9a992" p="595 775 620 765 655 768 662 745 690 755 725 768 770 768 775 785 790 795 750 830 745 850 700 857 650 835 610 820 608 790" />
    <Area amp={0.09} f={DARK} p="393 820 430 830 460 862 500 855 545 850 520 880 510 905 540 940 500 960 440 980 430 905 378 905 375 855 395 865" />
    <Area amp={0.09} f={DARK} p="425 920 500 895 520 925 540 950 500 980 485 1045 480 1040 460 1015 425 1010 430 980" />
    <Area amp={0.09} f="#d34a57" p="318 862 345 862 352 895 375 905 420 910 425 920 425 965 435 1010 400 1008 370 990 350 975 335 940 330 900" />
    <Area f={SEA} p="340 832 360 808 375 810 373 828 362 835 372 870 380 905 355 905 355 870 345 855" />
    <Area amp={0.09} f="#c43c55" p="480 1010 500 980 505 950 520 925 535 935 545 965 600 995 640 985 650 980 655 1000 620 1030 600 1035 580 1060 545 1090 540 1130 525 1148 510 1110 498 1050 485 1048 475 1030|542 1138 552 1145 553 1162 545 1165" />
    <Area f="#c43c55" p="610 1040 620 1005 640 980 660 985 662 1025 680 1035 655 1065 660 1100 640 1085 625 1060|725 1058 738 1050 730 1068|803 1010 805 1020 798 1038 795 1025" />
    <Area f="#d34a57" p="658 1065 690 1060 705 1095 680 1105 670 1100 665 1130 680 1165 665 1140 660 1100" />
    <Area f={DARK} p="680 1035 710 1070 715 1110 695 1130 685 1110 705 1095 690 1060" />
    <Area f="#e06060" p="685 1040 710 1035 705 1055 725 1095 725 1120 705 1145 703 1130 715 1115 710 1080" />
    <Area f="#e86a5f" p="672 1160 690 1175 695 1200 680 1185" />
    <Area f={IDN} p="638 1168 660 1180 690 1215 708 1250 690 1245 665 1210|705 1258 770 1268 780 1278 740 1275 710 1268|735 1200 775 1175 785 1180 780 1210 775 1235 740 1238 732 1215|795 1200 825 1198 800 1210 810 1245 800 1220 798 1250 792 1235|890 1240 875 1225 905 1235 925 1225 960 1240 985 1285 965 1280 940 1260 935 1282 910 1280 905 1250 890 1245|860 1218 880 1220 875 1228|800 1068 810 1075 805 1100 820 1110 797 1095|815 1140 832 1145 832 1165 820 1160|810 1110 825 1120 822 1130|985 1262 1000 1245 998 1255|838 1195 842 1210 845 1225" />
    <Area f="#e86a5f" p="735 1195 770 1175 775 1158 785 1170 775 1178 750 1200" />
    <Area f={DARK} p="865 848 855 880 850 892 830 895 828 880 820 878 840 865" />
    <Area f="#5d88ab" p="835 895 852 892 855 915 848 930 836 930" />
    <Area f="#f49b85" p="930 825 955 840 932 858 925 850|925 870 932 890 920 920 890 940 870 950 865 935 890 930 915 910 918 880|860 940 868 950 862 958" />
    <Area amp={0.09} f="#bf3a54" p="262 950 275 962 290 950 335 975 350 1005 375 1020 390 1035 375 1065 310 1080 295 1050 262 985" />
    <Area f={DARK} p="310 1080 375 1065 380 1085 320 1112|268 910 300 905 290 945 270 945" />
    <Area f="#dc5158" p="390 1035 390 1010 415 1035 400 1065 375 1078 375 1062 388 1055" />
    <Area f="#ee7063" p="365 1015 388 1008 390 1025 372 1028|262 945 285 950 268 975" />
    <Area f="#c8435a" p="300 910 320 905 335 940 350 975 330 975 290 950" />
    <Area amp={0.08} f={DARK} p="6 915 30 912 60 905 105 905 112 930 105 952 135 958 165 972 172 948 200 955 235 965 255 960 262 985 275 1035 290 1085 315 1115 320 1130 362 1120 350 1160 320 1210 290 1245 290 1290 298 1330 265 1370 265 1400 248 1420 240 1450 215 1485 170 1495 155 1480 140 1430 115 1345 125 1300 128 1260 100 1225 105 1185 98 1165 70 1160 30 1172 -5 1178 -30 1160 -57 1120 -65 1097 -57 1040 -41 995 -21 975 -17 950" />
    <Area amp={0.05} f="#c23b54" p="6 915 30 920 34 950 -13 980 -13 992 -41 992 -21 975 -17 950" />
    <Area amp={0.05} f="#d64b58" p="105 952 135 958 165 972 172 948 200 958 200 1055 135 1028 105 1010|98 905 112 930 105 952 92 940" />
    <Area amp={0.05} f="#d04a57" p="115 1345 175 1345 180 1350 170 1390 168 1440 145 1440|145 1440 168 1440 170 1420 215 1385 248 1390 248 1420 240 1450 215 1485 170 1495 155 1480" />
    <Area f="#e05a5a" p="172 1355 200 1355 222 1385 205 1405 185 1425 170 1420" />
    <Area f={DARK} p="350 1305 358 1345 335 1412 315 1405 318 1345 345 1325" />
    <Border p="5 1013 65 1065 105 1035 105 1010|65 1060 65 1090 10 1110 0 1110|105 1035 135 1028 145 1060 125 1100 135 1140 115 1165|200 1038 270 1038|200 1055 195 1110 185 1130 200 1150|195 1130 280 1130 285 1075|255 1135 250 1170 300 1185 340 1160|300 1185 300 1225|130 1110 65 1105 60 1155|30 1170 25 1125|135 1140 190 1135|190 1150 130 1170 100 1190|250 1170 235 1180 220 1175 190 1150|235 1180 245 1240 290 1245|100 1225 120 1250 150 1230 145 1190|125 1265 155 1270 155 1300 185 1300 180 1345|115 1345 180 1345 225 1345 250 1320 250 1290 225 1275 230 1240|225 1345 248 1390|250 1320 298 1330|210 1310 250 1290|275 1095 320 1130|245 1240 250 1290|200 955 200 1055" />
    <Border p="430 880 500 905|440 865 510 880|395 865 440 890 475 905|430 905 480 900 500 960|470 985 510 960|460 865 475 900|545 965 600 990 595 1030 610 1040|925 1230 925 1280|575 1000 600 1010" />
    <Border p="-37 992 -13 992 -13 1005 -33 1005 -37 1045 -62 1045|-13 992 6 1008 8 1090 -41 1092 -53 1080|6 1008 70 1060|8 1090 11 1130 26 1130 46 1100 70 1095|-53 1120 -29 1120 -21 1165|11 1130 -5 1160|26 1130 26 1165|50 1130 50 1165" />
    <Border p="958 838 990 810 1010 780 1025 755|790 1275 830 1280 870 1265|812 1110 830 1145|830 1220 880 1240|770 1165 800 1110|130 470 160 450 220 430 235 440|130 500 70 610|1010 1255 1055 1298|560 290 555 330 600 310|600 250 645 265" dash="5 4 2 3" w={1.8} />
    <Border p="855 970 830 1000 800 1010|950 1050 955 1080 950 1110|1085 1320 1095 1350|1072 1365 1090 1388|1155 1350 1168 1335|625 1105 622 1150 632 1170|640 1195 665 1235|1110 1155 1140 1230|310 1300 330 1310|385 1372 410 1370|1090 700 1080 690|1140 1515 1160 1531|700 1200 720 1225|330 1118 375 1112|388 1245 395 1275" dash="2 5 3 4" w={1.3} />
    <g fill="#9a4a80" fillOpacity="0.3" stroke="none">
      <path d="M670 330L700 320L705 335L680 355ZM735 690L730 730L700 752L695 745L722 720ZM670 690L690 685L690 725L675 710ZM555 430L568 440L562 460ZM590 485L600 488L592 505ZM235 600L250 590L255 615L240 640ZM262 595L270 610L265 630ZM275 645L288 655L282 665ZM500 810L540 800L545 808L505 825ZM930 295L945 300L940 318ZM945 395L960 405L955 415ZM235 1205L255 1215L240 1235ZM200 1025L225 1020L240 1035ZM372 855L385 855L380 878Z" />
    </g>
  </g>
);

const europe = (
  <g transform="translate(461 46) scale(0.33333)">
    <Area f="#f79d84" p="350 405 400 380 410 345 435 300 440 265 480 235 540 195 590 210 580 225 550 225 500 245 460 265 440 300 435 360 415 390 415 450 370 482 350 450" amp={0.22} />
    <Area f="#f79d84" p="440 300 460 265 500 245 525 270 525 325 500 335 505 365 470 390 465 420 480 450 460 480 455 510 430 528 412 480 418 380 435 355|500 245 555 260 550 225 580 225 583 300 580 340 598 395 575 430 520 445 502 430 500 385 510 365 540 340 525 325 525 270|470 490 482 485 475 502" amp={0.1} />
    <Area f="#6f96b4" p="380 505 400 490 405 515 420 530 400 540 385 535" />
    <Area f="#e5d6cc" p="255 475 275 475 270 490 285 490 280 515 300 550 320 575 310 600 255 605 275 590 255 580 275 565 268 540 250 525 250 495" />
    <Area f="#f4b5a5" p="210 545 240 530 250 545 240 580 210 588 215 570" />
    <Area amp={0.1} f="#f9a28b" p="218 700 290 705 332 718 305 745 300 770 270 787 245 788 235 780 240 720 220 715" />
    <Area amp={0.1} f="#78a0bd" p="220 718 240 720 235 780 220 778" />
    <Area amp={0.1} f="#7ba0bd" p="260 635 290 628 325 597 340 610 380 625 378 645 368 665 372 705 355 712 330 715 290 700 295 665 262 645" />
    <Area f="#8db4cf" p="340 580 370 555 360 590 360 612 330 600" />
    <Area amp={0.1} f="#9fc4da" p="365 555 395 540 435 545 440 590 420 605 430 645 380 645 362 620 358 590" />
    <Area amp={0.1} f={RUS} p="440 550 500 535 520 550 525 590 510 615 470 612 442 590" />
    <Area f="#9fc4da" p="418 605 440 595 478 615 440 628|368 650 400 648 395 665 370 668" />
    <Area f="#4f7fa6" p="408 648 460 625 465 650 430 665" />
    <Area f="#a3c6dc" p="370 668 400 660 430 665 425 680 410 690 430 720 462 745 475 745 455 755 450 775 452 755 430 735 400 705 390 690 375 690|420 768 447 768 440 782|382 720 392 725 390 752 382 750" />
    <Area f="#f4816d" p="458 655 470 642 515 632 500 660 470 668|510 700 565 695 560 720 520 725|550 720 565 722 560 735" />
    <Area f="#f79d84" p="462 635 510 618 510 632 470 642" />
    <Area amp={0.1} f="#ee7063" p="515 645 555 635 580 680 560 695 515 695 500 665|555 635 585 660 575 670" />
    <Area f="#f08a76" p="440 668 475 668 480 705 450 690" />
    <Area f="#e0555a" p="452 680 480 680 480 708|485 715 500 710 520 715 500 745 488 738" />
    <Area f="#e0d9d4" p="480 670 495 665 515 700 500 712 485 695" />
    <Area f="#8fb3cf" p="495 745 520 725 552 730 525 745 535 765 520 790 500 770" amp={0.25} />
    <Area f="#9fc4da" p="520 460 565 455 565 485 525 490" />
    <Area f="#85aecb" p="500 505 510 488 525 495 565 485 570 515 500 515" />
    <Area f="#93b9d3" p="500 515 550 515 535 540 505 535" />
    <Area amp={0.1} f="#e35e5c" p="515 620 530 590 600 585 620 575 680 620 670 650 640 660 600 665 580 655 550 635 515 640|625 668 655 672 640 685" />
    <Area amp={0.1} f="#dc5158" p="525 590 520 550 550 520 575 515 600 550 600 585" />
    <Area amp={0.1} f="#f4816d" p="548 730 580 730 620 720 660 725 715 725 722 775 650 782 590 790 560 780" />
    <Area f="#8fb3cf" p="685 705 740 715 730 728 700 725" />
    <Area f="#dc5158" p="715 725 745 730 768 755 745 765 722 755" />
    <circle cx="618" cy="801" r="9" fill={DARK} stroke="none" />
    <Border p="430 270 470 235 540 197 590 212|440 285 405 350 352 400|350 420 358 465|520 798 560 798|530 745 550 775|235 490 250 485|285 440 295 432|232 405 242 412|430 640 440 680 460 710|75 320 95 312|325 750 345 740" w={2} dash="3 2" />
  </g>
);

const oceania = (
  <g transform="translate(661 196) scale(0.33333)">
    <Area amp={0.1} f="#a5c7de" p="768 915 800 905 850 885 885 845 900 850 925 815 975 820 980 845 1020 870 1030 830 1038 805 1060 850 1070 880 1115 915 1140 945 1140 985 1108 1080 1080 1090 1015 1090 1000 1050 985 1030 975 1045 935 1015 870 1030 855 1045 800 1055 780 1045 787 1020 768 970 765 940" />
    <path d="M985 975l8 5l2 20l4 20l-8-8l-4-20z" fill="#84b8e0" stroke="none" />
  </g>
);

const RED = "#a8123c";
const labels: [string, number, number, string][] = [
  ["Greenland", 1679, 261, "#c8564c"], ["Canada", 1454, 350.5, "#ab2238"], ["United", 1492.5, 438, "#d2776c"], ["States", 1492, 451, "#d2776c"],
  ["Mexico", 1484, 507.5, "#7c1028"], ["Colombia", 1571, 569.5, "#8c2a30"], ["Peru", 1573, 621, "#b8303c"], ["Brazil", 1647.6, 618, "#c0443e"],
  ["Argentina", 1601, 691, "#cf5c50"], ["Sweden", 1861, 302, "#d87060"], ["Finland", 1883, 328, "#d2675a"], ["Norway", 1830, 337, "#cf6a60"],
  ["Germany", 1834, 394, "#6f93c0"], ["France", 1809, 416, "#3f6ca8"], ["Spain", 1792, 442, "#dc7465"], ["Belarus", 1888.6, 384, "#b02a3e"],
  ["Ukraine", 1901, 403.5, "#b83a40"], ["Turkey", 1908, 448, "#c9544a"], ["Russia", 2126, 314, "#bb3c40"], ["Kazakhstan", 2018.6, 406, RED],
  ["Mongolia", 2121, 417, "#d57a6c"], ["China", 2111, 464, RED], ["Iran", 1969, 470.5, RED], ["Iraq", 1936, 470.5, "#8e1238"], ["Pakistan", 2009, 489.5, "#840c38"],
  ["India", 2045.5, 508, "#920f3a"], ["Algeria", 1809, 488, "#840c38"], ["Libya", 1855.7, 493, "#a0183a"], ["Egypt", 1891.6, 497, "#840c38"],
  ["Saudi", 1939, 497, "#8c103c"], ["Arabia", 1939, 509.6, "#8c103c"], ["Yemen", 1950, 532, "#741438"], ["Sudan", 1893.6, 531.5, "#840c38"],
  ["Democratic", 1874.6, 573, "#840c38"], ["Republic", 1874.6, 585.5, "#840c38"], ["of Congo", 1874.6, 598, "#840c38"], ["Japan", 2231.8, 461, "#6a4a48"],
  ["Indonesia", 2157.5, 584, "#4a1a24"], ["Australia", 2218, 660.6, "#6e95bb"], ["South", 1874, 680, "#9c1638"], ["Africa", 1874, 692.5, "#9c1638"],
];

const MapLabel = styled.text`
  font: 500 11px ${UI};
  text-anchor: middle;
  fill-opacity: 0.85;
`;

const WorldMap = () => (
  <svg width="1124" height="561" viewBox="0 0 1124 561" style={{ background: SEA, display: "block" }}>
    <g stroke="#6d6c68" strokeWidth="1.1" strokeLinejoin="round">
      {americasNorth}
      {americasSouth}
      {eurasiaAfrica}
      {europe}
      {oceania}
    </g>
    {labels.map(([t, x, y, c]) => (
      <MapLabel key={t} x={x - 1239} y={y - 150} fill={c}>{t}</MapLabel>
    ))}
  </svg>
);

/* ---------- legends ---------- */

const continents: [string, string][] = [
  ["High income", "#76b7b2"], ["Upper middle income", "#bab0ac"], ["Europe", "#e15759"], ["Asia", "#f58f2d"], ["North America", "#b07aa1"],
  ["South America", "#9c755f"], ["Lower middle income", "#edc948"], ["Africa", "#4e79a7"], ["Low income", "#59a14f"], ["Oceania", "#ff9da7"],
];

const locations: [string, string][] = [
  ["China, Actual", "#4e79a7"], ["China, Estimate", "#a0cbe8"], ["Malaysia, Actual", "#f58f2d"], ["Malaysia, Estimate", "#ffbe7d"],
  ["Russia, Actual", "#59a14f"], ["Russia, Estimate", "#8cd17d"], ["Saudi Arabia, Actual", "#b6992d"], ["Saudi Arabia, Estimate", "#f1ce63"],
  ["United Arab Emirates, Actual", "#499894"], ["United Arab Emirates, Estimate", "#86bcb6"], ["United Kingdom, Actual", "#e15759"],
  ["United Kingdom, Estimate", "#ff9d9a"], ["United States, Actual", "#79706e"], ["United States, Estimate", "#b5aba8"],
];

const Rows = ({ items }: { items: [string, string][] }) => (
  <>
    {items.map(([t, c]) => (
      <LegendRow key={t}>
        <Swatch $c={c} />
        {t}
      </LegendRow>
    ))}
  </>
);

export default function App() {
  return (
    <>
      <GlobalStyle />
      <Window>
        <TitleBar>
          <AppBadge><Logo mono s={14} /></AppBadge>
          Tableau Public - Book1
          <WindowButtons>
            <svg width="12" height="12" stroke="#777" fill="none"><path d="M1 6.500h10" /></svg>
            <svg width="12" height="12" stroke="#777" fill="none"><path d="M1.500 3.500h7v7h-7zM3.500 1.500h5a2 2 0 0 1 2 2v5" /></svg>
            <svg width="12" height="12" stroke="#777" fill="none"><path d="M1 1l10 10M11 1L1 11" /></svg>
          </WindowButtons>
        </TitleBar>
        <MenuBar>
          {menus.map(([a, b, c, w]) => (
            <MenuItem key={a + b + c} $w={w}>{a}<u>{b}</u>{c}</MenuItem>
          ))}
        </MenuBar>
        <Toolbar />
        <Body>
          <Rail>
            <RailTab $h={29}><svg width="8" height="12" fill="none" stroke="#555" strokeWidth="1.300"><path d="M1.500 1.500L6 6L1.500 10.500" /></svg></RailTab>
            <RailTab $h={105} $drop={3}><Vertical>Dashboard</Vertical></RailTab>
            <RailTab $h={107} $drop={4}><Vertical>Layout</Vertical></RailTab>
          </Rail>
          <Canvas>
            <TopRow>
              <LeftColumn>
                <GlobalPanel>
                  <SheetTitle $pad={9}>Global Numbers</SheetTitle>
                  <NumbersRow>
                    <NumbersTable>
                      <HeadCell>Total Cases</HeadCell>
                      <HeadCell>Total Deaths</HeadCell>
                      <HeadCell>Death Percentage</HeadCell>
                      <NumberCell>772,001,411</NumberCell>
                      <NumberCell>7,082,939</NumberCell>
                      <NumberCell>0.92</NumberCell>
                    </NumbersTable>
                    <ScrollTrack><ScrollThumb /></ScrollTrack>
                  </NumbersRow>
                </GlobalPanel>
                <DeathsPanel>
                  <SheetTitle $pad={8}>Total Deaths Per Continent</SheetTitle>
                  <BarChart />
                </DeathsPanel>
              </LeftColumn>
              <MapPanel>
                <SheetTitle $pad={4}>Percent Population Infected Per Country</SheetTitle>
                <MapFrame><WorldMap /></MapFrame>
                <Grip><i /><i /></Grip>
                <PanelTools>
                  <svg width="21" height="83" fill="none" stroke="#fff" strokeWidth="1.400">
                    <path d="M6 5.500l9 9M15 5.500l-9 9" />
                    <path d="M9 25.500H5.500v10h9V31M10 31l6-6.500M11.500 24H16v5" />
                    <path d="M4.500 47h12l-4.500 5.500v5.500l-3-1v-4.500z" />
                    <path d="M7 71.500h7l-3.500 4z" fill="#fff" stroke="none" />
                  </svg>
                </PanelTools>
                <Attribution>© 2023 Mapbox © OpenStreetMap</Attribution>
                <Unknown>18 unknown</Unknown>
              </MapPanel>
              <Legend $pad="10px 0 0 2px" $track={0.1}>
                <LegendTitle>Continent</LegendTitle>
                <Rows items={continents} />
                <LegendTitle $top={6} $track={0.3}>Percent Population Infect..</LegendTitle>
                <ScaleRow>0.00<Scale />73.76</ScaleRow>
              </Legend>
            </TopRow>
            <BottomRow>
              <TrendPanel>
                <SheetTitle $pad={9}>Percent Population Infected</SheetTitle>
                <TrendChart />
              </TrendPanel>
              <Divider />
              <Legend $pad="0 0 0 3px" $track={0.34}>
                <LegendTitle>Location, Forecast indicator</LegendTitle>
                <Rows items={locations} />
              </Legend>
            </BottomRow>
          </Canvas>
        </Body>
        <TabBar>
          <Tab $w={131} $start>
            <svg width="10" height="14" fill="none" stroke="#666"><rect x="1.500" y="1.500" width="7" height="11" rx="2" /><path d="M1.500 4.500h7" /></svg>
            Data Source
          </Tab>
          <Tab $w={56}>Sheet 1</Tab>
          <Tab $w={57}>Sheet 2</Tab>
          <Tab $w={57}>Sheet 3</Tab>
          <Tab $w={57}>Sheet 4</Tab>
          <Tab $w={102} $active>
            <svg width="12" height="12" fill="none" stroke="#666"><path d="M.5.500h11v11H.5zM5.500.500v11M.5 5.500h11" /></svg>
            Dashboard 1
          </Tab>
          <Tab $w={32}><Icon s={18}><path d="M11 16H3V3h13v8M7 13v-3M9.500 13V7M12 13V9" /><Plus x={15.5} y={15} /></Icon></Tab>
          <Tab $w={32}><Icon s={18}><path d="M9.500 15.500H3V3h13v7M9.500 3v12.500M3 9.500h13" /><Plus x={15.5} y={15} /></Icon></Tab>
          <Tab $w={32}><Icon s={18}><path d="M9.500 5.500L3 2.500v12l6 2.500V5.500L16 2.500V10" /><Plus x={15.5} y={15} /></Icon></Tab>
        </TabBar>
        <StatusBar>
          <span>237 marks</span>
          <span>1 row by 1 column</span>
          <span>SUM(Percent Population Infected): 4,924.86</span>
          <StatusCells>
            <StatusCell $w={127} />
            <StatusCell $w={27} />
            <StatusCell $w={27} />
            <StatusCell $w={47} />
            <StatusCell $w={71}>
              <svg width="70" height="12" fill="#b9b9b9"><path d="M8 2h1.500v8H8zM14 2v8l-4-4zM29 2v8l-4-4zM42 2v8l4-4zM57 2v8l4-4zM61 2h1.500v8H61z" /></svg>
            </StatusCell>
            <StatusCell $w={68}>
              <svg width="66" height="13">
                <path fill="#aaa" d="M9 1h3v3H9zM13 1h3v3h-3zM17 1h3v3h-3zM9 5h3v3H9zM13 5h3v3h-3zM17 5h3v3h-3zM9 9h3v3H9zM13 9h3v3h-3zM17 9h3v3h-3zM30 1h12v7H30zM30 9h3v3h-3zM34.500 9h3v3h-3zM39 9h3v3h-3z" />
                <path fill="#666" d="M51 1h10v11H51z" />
              </svg>
            </StatusCell>
          </StatusCells>
        </StatusBar>
      </Window>
    </>
  );
}
